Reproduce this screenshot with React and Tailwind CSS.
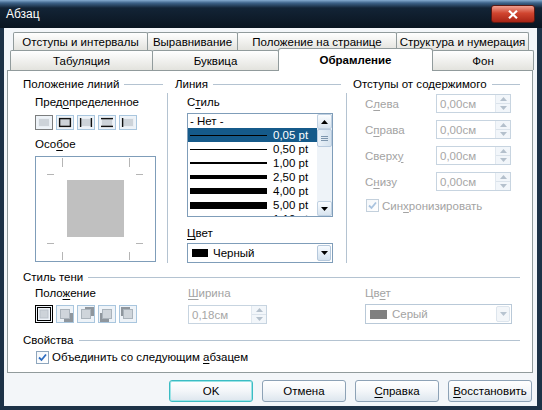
import React from 'react';

const U = ({ children }) => <span className="underline underline-offset-2">{children}</span>;

const GroupHeader = ({ title, className = '' }) => (
  <div className={`flex items-center h-[14px] ${className}`}>
    <span className="pr-[5px] whitespace-nowrap">{title}</span>
    <div className="flex-1 h-px bg-[#b4c3d1]" />
  </div>
);

const ArrowUp = ({ color = '#000' }) => (
  <svg width="7" height="4" viewBox="0 0 7 4"><path d="M0 4 L3.5 0 L7 4 Z" fill={color} /></svg>
);

const ArrowDown = ({ color = '#000' }) => (
  <svg width="7" height="4" viewBox="0 0 7 4"><path d="M0 0 L7 0 L3.5 4 Z" fill={color} /></svg>
);

const Tab = ({ w, children, active, first }) => {
  if (active) {
    return (
      <div className={`${w} h-[23px] -mt-[2px] -ml-px relative z-10 bg-white border border-b-0 border-[#919b9c] rounded-t-[3px] flex items-center justify-center font-bold`}>
        {children}
      </div>
    );
  }
  return (
    <div className={`${w} h-full ${first ? '' : '-ml-px'} bg-gradient-to-b from-white to-[#e3e3de] border border-b-0 border-[#919b9c] rounded-t-[2px] flex items-center justify-center whitespace-nowrap`}>
      {children}
    </div>
  );
};

const Preset = ({ lines = '', focus }) => (
  <svg width="18" height="15" viewBox="0 0 18 15">
    <rect x="0.5" y="0.5" width="17" height="14" fill="#eef3f8" stroke={focus ? '#000' : '#a9c6de'} strokeDasharray={focus ? '1 1' : undefined} />
    <rect x="3.5" y="3.5" width="11" height="8" fill="#cdd3d9" stroke="#e9eef3" />
    {lines.includes('t') && <line x1="3" y1="3.6" x2="15" y2="3.6" stroke="#111" strokeWidth="1.4" />}
    {lines.includes('b') && <line x1="3" y1="11.4" x2="15" y2="11.4" stroke="#111" strokeWidth="1.4" />}
    {lines.includes('l') && <line x1="3.6" y1="3" x2="3.6" y2="12" stroke="#111" strokeWidth="1.4" />}
    {lines.includes('r') && <line x1="14.4" y1="3" x2="14.4" y2="12" stroke="#111" strokeWidth="1.4" />}
  </svg>
);

const ShadowPreset = ({ dir, selected }) => {
  if (selected) {
    return (
      <svg width="18" height="18" viewBox="0 0 18 18">
        <rect x="0.5" y="0.5" width="17" height="17" fill="#eef3f8" stroke="#000" />
        <rect x="2.5" y="2.5" width="13" height="13" fill="none" stroke="#000" />
        <rect x="5" y="5" width="8" height="8" fill="#cdd3d9" stroke="#b9c1c9" />
      </svg>
    );
  }
  const off = { br: [3, 3], tr: [3, -3], bl: [-3, 3], tl: [-3, -3] }[dir];
  return (
    <svg width="18" height="18" viewBox="0 0 18 18">
      <rect x="0.5" y="0.5" width="17" height="17" fill="#eef3f8" stroke="#a9c6de" />
      <rect x={5 + off[0]} y={5 + off[1]} width="9" height="9" fill="#8f969d" />
      <rect x="4.5" y="4.5" width="9" height="9" fill="#cfd5db" stroke="#aab3bb" />
    </svg>
  );
};

const Checkbox = ({ disabled }) => (
  <div className={`w-[13px] h-[13px] border ${disabled ? 'border-[#c3d0dc]' : 'border-[#8ea6bd]'} bg-gradient-to-br from-[#f4f7fa] to-white flex items-center justify-center`}>
    <svg width="9" height="9" viewBox="0 0 9 9">
      <path d="M1 4.5 L3.5 7 L8 1.5" fill="none" stroke={disabled ? '#a9c3df' : '#2d6cc0'} strokeWidth="1.8" />
    </svg>
  </div>
);

const Spin = ({ value, w }) => (
  <div className={`${w} h-[19px] border border-[#c7d4e0] bg-white flex items-center pl-[3px] text-[#a6a6a6]`}>
    <span>{value}</span>
    <div className="ml-auto w-[15px] h-full flex flex-col border-l border-[#e1e8ef]">
      <div className="flex-1 flex items-center justify-center bg-[#f2f6fa] border-b border-[#dbe3eb]"><ArrowUp color="#b4c0cc" /></div>
      <div className="flex-1 flex items-center justify-center bg-[#f2f6fa]"><ArrowDown color="#b4c0cc" /></div>
    </div>
  </div>
);

const ComboButton = ({ disabled }) => (
  <div className={`ml-auto mr-px w-[14px] h-[16px] rounded-[2px] border ${disabled ? 'border-[#dde5ed] bg-[#f3f6f9]' : 'border-[#b5c8dc] bg-gradient-to-b from-[#f7fbff] to-[#d3e1ee]'} flex items-center justify-center`}>
    <ArrowDown color={disabled ? '#b8c4d0' : '#000'} />
  </div>
);

const ScrollBtn = ({ children }) => (
  <div className="h-[15px] rounded-[2px] border border-[#c0d1e2] bg-gradient-to-b from-[#fbfdff] to-[#d8e4ef] flex items-center justify-center">
    {children}
  </div>
);

const lineStyles = [
  ['0,05 pt', 'h-px', true],
  ['0,50 pt', 'h-px', false],
  ['1,00 pt', 'h-[2px]', false],
  ['2,50 pt', 'h-[4px]', false],
  ['4,00 pt', 'h-[6px]', false],
  ['5,00 pt', 'h-[7px]', false],
  ['1,10 pt', 'h-[3px]', false],
];

const StyleList = () => (
  <div className="mt-[4px] w-[146px] h-[104px] border border-[#7f9db9] bg-white flex">
    <div className="flex-1 overflow-hidden">
      <div className="h-[14px] flex items-center pl-[2px]">- Нет -</div>
      {lineStyles.map(([label, h, sel]) => (
        <div key={label} className={`h-[14px] flex items-center pl-[2px] ${sel ? 'bg-[#155a8a] text-white' : ''}`}>
          <div className={`w-[77px] ${h} bg-black`} />
          <span className="ml-[6px] whitespace-nowrap">{label}</span>
        </div>
      ))}
    </div>
    <div className="w-[15px] flex flex-col bg-[#eef3f8]">
      <ScrollBtn><ArrowUp /></ScrollBtn>
      <div className="h-[18px] rounded-[2px] border border-[#b8cade] bg-gradient-to-r from-[#eaf1f8] to-[#d5e2ee] flex flex-col items-center justify-center gap-[1px]">
        <div className="w-[7px] h-px bg-[#7d95ad]" />
        <div className="w-[7px] h-px bg-[#7d95ad]" />
        <div className="w-[7px] h-px bg-[#7d95ad]" />
      </div>
      <div className="flex-1" />
      <ScrollBtn><ArrowDown /></ScrollBtn>
    </div>
  </div>
);

const Preview = () => (
  <div className="mt-[5px] w-[121px] h-[106px] border border-[#7f9db9] bg-white">
    <svg width="119" height="104" viewBox="0 0 119 104">
      <g stroke="#b5b5b5" strokeWidth="1">
        <line x1="26.5" y1="1" x2="26.5" y2="10" />
        <line x1="93.5" y1="1" x2="93.5" y2="10" />
        <line x1="11" y1="17.5" x2="18" y2="17.5" />
        <line x1="100" y1="17.5" x2="107" y2="17.5" />
        <line x1="11" y1="86.5" x2="18" y2="86.5" />
        <line x1="100" y1="86.5" x2="107" y2="86.5" />
        <line x1="26.5" y1="95" x2="26.5" y2="103" />
        <line x1="93.5" y1="95" x2="93.5" y2="103" />
      </g>
      <rect x="31" y="23" width="57" height="57" fill="#c0c0c0" />
    </svg>
  </div>
);

const Button = ({ w, children, primary }) => (
  <div className={`${w} h-[22px] rounded-[3px] border ${primary ? 'border-[#3cbcc3] shadow-[inset_0_0_0_1px_#9be3e6]' : 'border-[#8da2b6]'} bg-gradient-to-b from-white via-[#f3f6f9] to-[#dde6ee] flex items-center justify-center`}>
    {children}
  </div>
);

const TitleBar = () => (
  <div className="h-[28px] flex items-center pl-[6px] text-white bg-[linear-gradient(to_bottom,#86acd0_0px,#3d6288_3px,#132436_8px,#0a1520_100%)]">
    <span className="text-[12px]">Абзац</span>
    <div className="ml-auto mr-[7px] w-[44px] h-[18px] rounded-[3px] border border-[#5a1a14] bg-[linear-gradient(to_bottom,#f0a090_0%,#d0452f_45%,#a82415_100%)] flex items-center justify-center">
      <svg width="10" height="9" viewBox="0 0 10 9">
        <path d="M1 0.8 L9 8.2 M9 0.8 L1 8.2" stroke="#fff" strokeWidth="2.2" />
      </svg>
    </div>
  </div>
);

const Tabs = () => (
  <div className="pt-[4px]">
    <div className="flex h-[18px] ml-[9px]">
      <Tab w="w-[135px]" first>Отступы и интервалы</Tab>
      <Tab w="w-[91px]">Выравнивание</Tab>
      <Tab w="w-[160px]">Положение на странице</Tab>
      <Tab w="w-[133px]">Структура и нумерация</Tab>
    </div>
    <div className="flex h-[20px] ml-[6px]">
      <Tab w="w-[143px]" first>Табуляция</Tab>
      <Tab w="w-[127px]">Буквица</Tab>
      <Tab w="w-[155px]" active>Обрамление</Tab>
      <Tab w="w-[102px]">Фон</Tab>
    </div>
  </div>
);

const Panel = () => (
  <div className="ml-[3px] w-[526px] h-[303px] bg-white border border-[#919b9c] pt-[6px] pl-[15px] pr-[12px] flex flex-col">
    <div className="flex h-[186px]">
      {/* Положение линий */}
      <div className="w-[145px] flex flex-col">
        <GroupHeader title="Положение линий" className="pr-[5px]" />
        <div className="flex-1 mt-[2px] pt-[2px] pl-[12px] border-r border-[#b4c3d1] flex flex-col">
          <div className="h-[14px]">Пред<U>о</U>пределенное</div>
          <div className="mt-[6px] flex gap-[3px]">
            <Preset focus />
            <Preset lines="tblr" />
            <Preset lines="lr" />
            <Preset lines="tb" />
            <Preset lines="l" />
          </div>
          <div className="mt-[7px] h-[14px]">Осо<U>б</U>ое</div>
          <Preview />
        </div>
      </div>

      {/* Линия */}
      <div className="ml-[7px] w-[172px] flex flex-col">
        <GroupHeader title="Линия" className="pr-[6px]" />
        <div className="flex-1 mt-[2px] pt-[2px] pl-[12px] border-r border-[#b4c3d1] flex flex-col">
          <div className="h-[14px]">С<U>т</U>иль</div>
          <StyleList />
          <div className="mt-[9px] h-[14px]"><U>Ц</U>вет</div>
          <div className="mt-[3px] w-[146px] h-[20px] border border-[#7f9db9] bg-white flex items-center pl-[4px]">
            <div className="w-[16px] h-[8px] bg-black" />
            <span className="ml-[5px]">Черный</span>
            <ComboButton />
          </div>
        </div>
      </div>

      {/* Отступы от содержимого */}
      <div className="ml-[6px] flex-1 flex flex-col">
        <GroupHeader title="Отступы от содержимого" />
        <div className="pt-[3px] pl-[12px] flex flex-col gap-[7px] text-[#a3a3a3]">
          {[
            [<>С<U>л</U>ева</>, 'l'],
            [<>С<U>п</U>рава</>, 'r'],
            [<>Сверх<U>у</U></>, 't'],
            [<>С<U>н</U>изу</>, 'b'],
          ].map(([label, k]) => (
            <div key={k} className="flex items-center h-[19px]">
              <div className="w-[71px]">{label}</div>
              <Spin value="0,00см" w="w-[75px]" />
            </div>
          ))}
          <div className="mt-px ml-px flex items-center h-[13px]">
            <Checkbox disabled />
            <span className="ml-[3px]">Син<U>х</U>ронизировать</span>
          </div>
        </div>
      </div>
    </div>

    {/* Стиль тени */}
    <GroupHeader title="Стиль тени" className="mt-[7px]" />
    <div className="flex mt-[2px]">
      <div className="w-[165px] pl-[12px] flex flex-col">
        <div className="h-[14px]">Поло<U>ж</U>ение</div>
        <div className="mt-[5px] flex gap-[3px]">
          <ShadowPreset selected />
          <ShadowPreset dir="br" />
          <ShadowPreset dir="tr" />
          <ShadowPreset dir="bl" />
          <ShadowPreset dir="tl" />
        </div>
      </div>
      <div className="w-[177px] flex flex-col text-[#a3a3a3]">
        <div className="h-[14px]"><U>Ш</U>ирина</div>
        <div className="mt-[5px]"><Spin value="0,18см" w="w-[79px]" /></div>
      </div>
      <div className="flex flex-col text-[#a3a3a3]">
        <div className="h-[14px]">Цв<U>е</U>т</div>
        <div className="mt-[4px] w-[147px] h-[20px] border border-[#b9c9d8] bg-white flex items-center pl-[4px]">
          <div className="w-[17px] h-[9px] bg-[#808080]" />
          <span className="ml-[5px]">Серый</span>
          <ComboButton disabled />
        </div>
      </div>
    </div>

    {/* Свойства */}
    <GroupHeader title="Свойства" className="mt-[9px]" />
    <div className="mt-[3px] pl-[13px] flex items-center h-[14px]">
      <Checkbox />
      <span className="ml-[3px]">Объединить со следующим <U>а</U>бзацем</span>
    </div>
  </div>
);

const Buttons = () => (
  <div className="mt-[7px] flex justify-end pr-[5px] gap-[9px]">
    <Button w="w-[84px]" primary>OK</Button>
    <Button w="w-[84px]">Отмена</Button>
    <Button w="w-[84px]"><span><U>С</U>правка</span></Button>
    <Button w="w-[84px]"><span><U>В</U>осстановить</span></Button>
  </div>
);

export default function App() {
  return (
    <div className="w-[542px] h-[410px] flex flex-col bg-[#0e1a26] text-[11.5px] leading-[14px] text-black font-['Liberation_Sans',Arial,sans-serif] overflow-hidden">
      <TitleBar />
      <div className="flex-1 flex flex-col bg-[#f3f6f9] border-l-[4px] border-r-[5px] border-b-[4px] border-[#1d3247]">
        <Tabs />
        <Panel />
        <Buttons />
      </div>
    </div>
  );
}
